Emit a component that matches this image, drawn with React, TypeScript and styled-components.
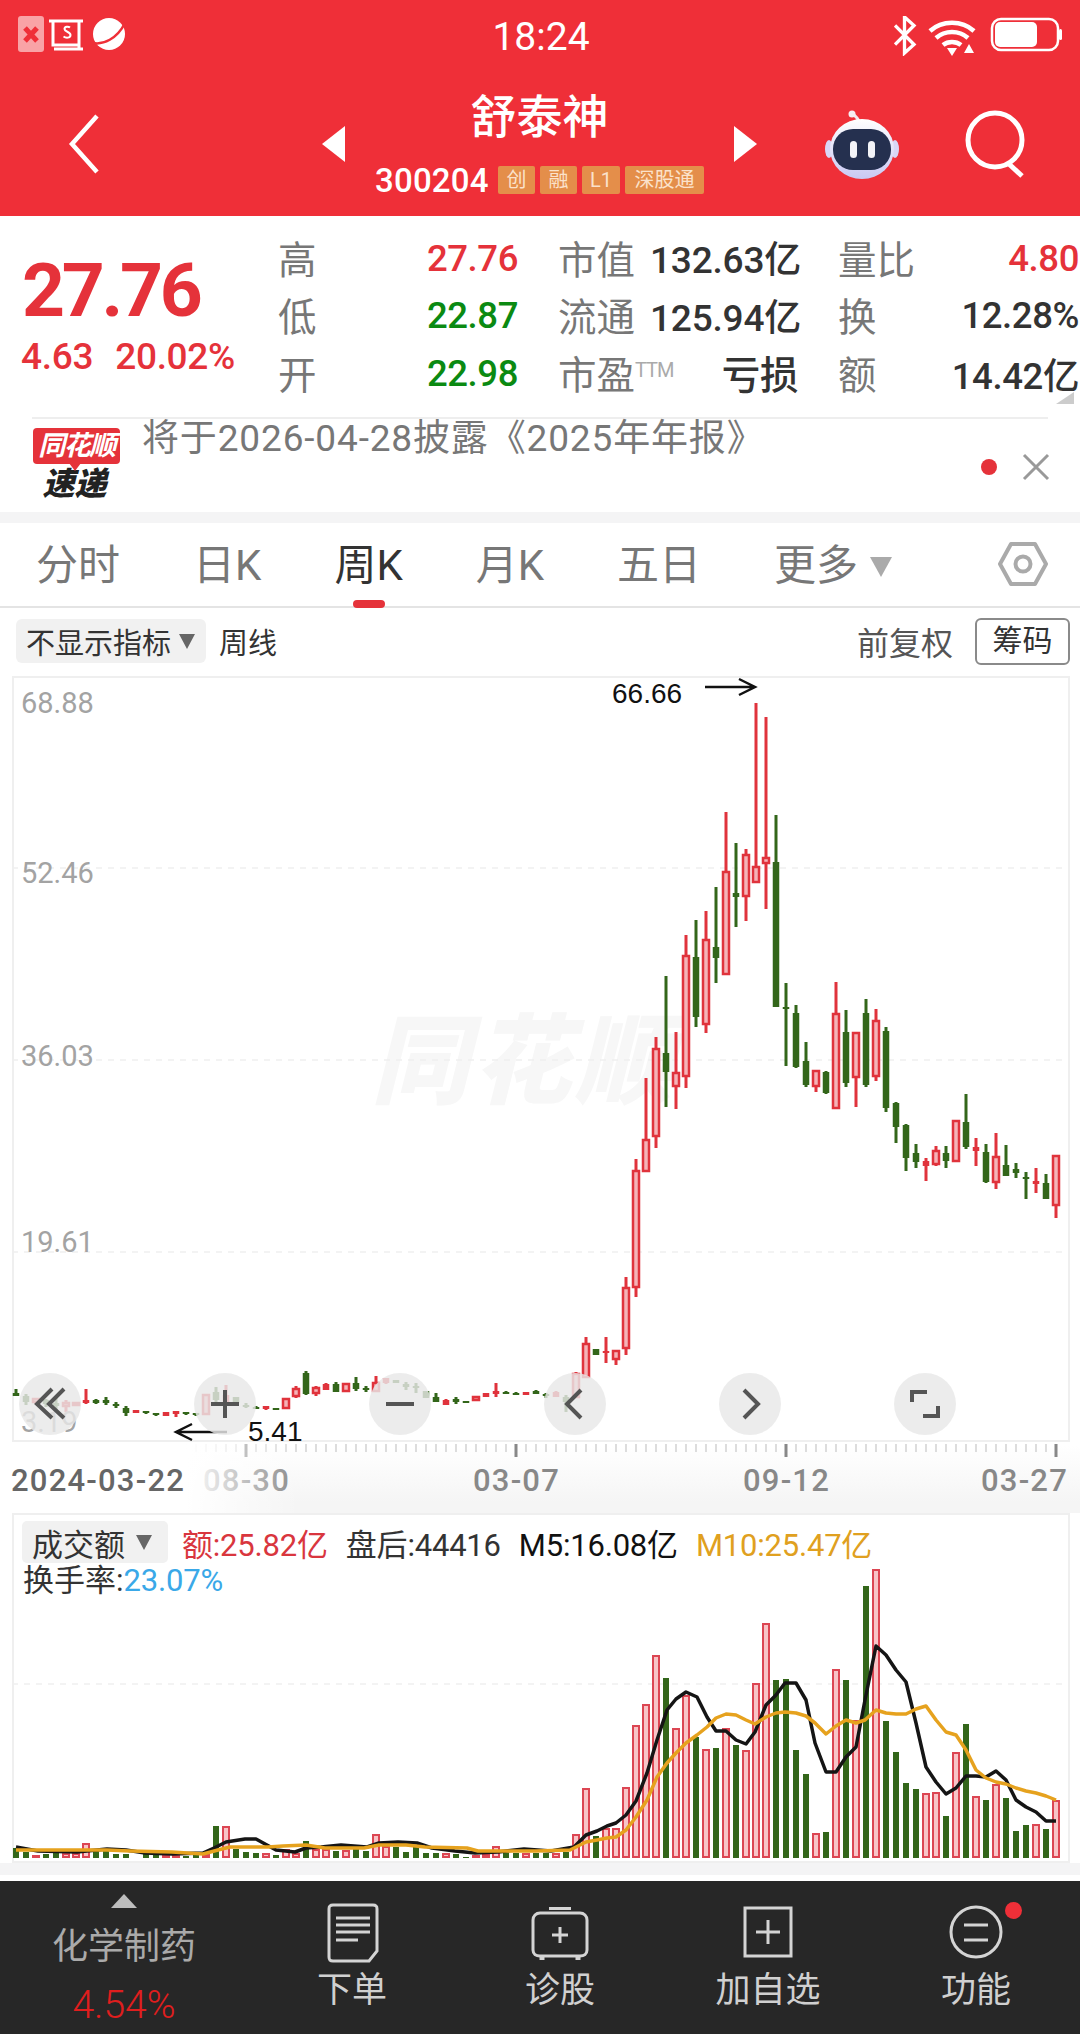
import React from "react";
import styled, { createGlobalStyle } from "styled-components";

const RED = "#e5323a";
const GREEN = "#0b8a12";
const CANDLE_RED = "#e0333c";
const CANDLE_GREEN = "#33661a";

const GlobalStyle = createGlobalStyle`
  html, body {
    margin: 0;
    padding: 0;
    background: #fff;
  }
  body {
    width: 1080px;
    height: 2034px;
    overflow: hidden;
    font-family: Roboto, "Noto Sans CJK SC", sans-serif;
  }
  * { box-sizing: border-box; }
`;

// [wickTop, bodyTop, bodyBottom, wickBottom, type]  g = falling, r = solid rise, h = hollow rise
type Candle = [number, number, number, number, "g" | "r" | "h"];

const candles: Candle[] = [
  [1389, 1393, 1396, 1396, "g"], [1394, 1396, 1402, 1405, "g"], [1398, 1398, 1403, 1404, "h"], [1399, 1400, 1404, 1407, "g"],
  [1398, 1403, 1406, 1410, "g"], [1400, 1402, 1407, 1412, "h"], [1402, 1402, 1406, 1406, "h"], [1389, 1400, 1403, 1404, "r"],
  [1399, 1400, 1403, 1404, "g"], [1397, 1400, 1403, 1405, "g"], [1402, 1404, 1406, 1408, "g"], [1406, 1408, 1413, 1416, "g"],
  [1410, 1410, 1413, 1413, "r"], [1411, 1411, 1413, 1414, "g"], [1413, 1413, 1415, 1416, "g"], [1412, 1412, 1416, 1416, "r"],
  [1411, 1411, 1414, 1417, "r"], [1412, 1412, 1414, 1415, "g"], [1413, 1413, 1415, 1416, "g"], [1394, 1394, 1415, 1415, "h"],
  [1387, 1392, 1400, 1403, "g"], [1385, 1395, 1403, 1406, "r"], [1397, 1397, 1403, 1403, "g"], [1403, 1405, 1406, 1408, "g"],
  [1406, 1407, 1408, 1409, "g"], [1406, 1406, 1409, 1410, "r"], [1408, 1408, 1409, 1410, "g"], [1398, 1398, 1409, 1409, "h"],
  [1386, 1388, 1397, 1398, "h"], [1371, 1373, 1394, 1395, "g"], [1386, 1387, 1394, 1396, "h"], [1383, 1384, 1390, 1390, "r"],
  [1382, 1384, 1392, 1392, "g"], [1383, 1383, 1392, 1392, "h"], [1377, 1383, 1389, 1391, "g"], [1386, 1388, 1390, 1392, "g"],
  [1376, 1382, 1392, 1392, "h"], [1378, 1378, 1383, 1384, "r"], [1380, 1380, 1383, 1383, "g"], [1382, 1384, 1387, 1390, "g"],
  [1383, 1386, 1388, 1393, "g"], [1391, 1391, 1398, 1398, "g"], [1393, 1397, 1402, 1402, "g"], [1399, 1400, 1405, 1405, "r"],
  [1397, 1399, 1402, 1404, "g"], [1401, 1401, 1402, 1403, "g"], [1396, 1396, 1401, 1401, "h"], [1393, 1393, 1397, 1397, "r"],
  [1383, 1391, 1394, 1397, "r"], [1391, 1392, 1394, 1394, "g"], [1392, 1393, 1395, 1395, "g"], [1392, 1392, 1395, 1395, "r"],
  [1390, 1391, 1394, 1394, "g"], [1393, 1394, 1396, 1398, "g"], [1391, 1392, 1397, 1397, "r"], [1395, 1397, 1402, 1412, "g"],
  [1372, 1373, 1398, 1398, "h"], [1337, 1343, 1378, 1378, "h"], [1349, 1349, 1355, 1355, "g"], [1337, 1351, 1353, 1363, "r"],
  [1350, 1350, 1360, 1365, "h"], [1277, 1287, 1349, 1355, "h"], [1159, 1170, 1288, 1297, "h"], [1078, 1139, 1172, 1172, "h"],
  [1037, 1048, 1137, 1148, "h"], [976, 1053, 1072, 1107, "g"], [1032, 1072, 1087, 1109, "h"], [935, 955, 1077, 1088, "h"],
  [920, 957, 1017, 1027, "g"], [911, 939, 1025, 1033, "h"], [887, 947, 958, 983, "g"], [812, 871, 975, 975, "h"],
  [843, 893, 897, 927, "g"], [849, 854, 897, 921, "h"], [703, 866, 883, 883, "h"], [717, 857, 864, 909, "h"],
  [815, 862, 1007, 1007, "g"], [983, 1007, 1009, 1066, "g"], [1005, 1013, 1067, 1068, "g"], [1042, 1061, 1085, 1087, "g"],
  [1070, 1070, 1087, 1092, "h"], [1071, 1072, 1093, 1094, "g"], [982, 1013, 1109, 1109, "h"], [1010, 1032, 1083, 1087, "g"],
  [1032, 1032, 1078, 1107, "h"], [999, 1013, 1085, 1087, "g"], [1009, 1020, 1077, 1081, "h"], [1027, 1031, 1108, 1112, "g"],
  [1102, 1103, 1127, 1143, "g"], [1124, 1125, 1158, 1171, "g"], [1144, 1153, 1162, 1168, "g"], [1158, 1161, 1166, 1181, "r"],
  [1146, 1150, 1165, 1166, "h"], [1146, 1153, 1161, 1168, "g"], [1120, 1120, 1162, 1162, "h"], [1094, 1122, 1147, 1149, "g"],
  [1138, 1147, 1151, 1166, "r"], [1144, 1152, 1182, 1183, "g"], [1133, 1156, 1183, 1189, "h"], [1145, 1165, 1176, 1176, "g"],
  [1163, 1169, 1173, 1178, "g"], [1172, 1177, 1178, 1199, "g"], [1168, 1181, 1184, 1193, "r"], [1174, 1183, 1199, 1199, "g"],
  [1155, 1155, 1206, 1218, "h"],
];

// [barTop, type]
const volumes: [number, "g" | "h"][] = [
  [1848, "g"], [1852, "g"], [1855, "h"], [1854, "g"], [1852, "g"], [1853, "h"], [1853, "h"], [1843, "h"], [1851, "g"], [1850, "g"],
  [1854, "g"], [1854, "g"], [1856, "h"], [1854, "g"], [1854, "g"], [1855, "h"], [1855, "h"], [1856, "g"], [1854, "g"], [1854, "h"],
  [1826, "g"], [1826, "h"], [1849, "g"], [1852, "g"], [1853, "g"], [1853, "h"], [1855, "g"], [1849, "h"], [1853, "h"], [1841, "g"],
  [1849, "h"], [1849, "h"], [1851, "g"], [1850, "h"], [1849, "g"], [1851, "g"], [1834, "h"], [1846, "h"], [1847, "g"], [1852, "g"],
  [1847, "g"], [1853, "g"], [1853, "g"], [1853, "h"], [1854, "g"], [1857, "g"], [1855, "h"], [1854, "h"], [1846, "h"], [1853, "g"],
  [1853, "g"], [1853, "h"], [1853, "g"], [1853, "g"], [1853, "h"], [1852, "g"], [1834, "h"], [1788, "h"], [1836, "g"], [1828, "h"],
  [1828, "h"], [1787, "h"], [1725, "h"], [1704, "h"], [1655, "h"], [1678, "g"], [1728, "h"], [1695, "h"], [1737, "g"], [1749, "h"],
  [1748, "g"], [1728, "h"], [1745, "g"], [1750, "h"], [1683, "h"], [1623, "h"], [1680, "g"], [1679, "g"], [1750, "g"], [1774, "g"],
  [1833, "h"], [1832, "g"], [1669, "h"], [1680, "g"], [1720, "h"], [1586, "g"], [1569, "h"], [1721, "g"], [1752, "g"], [1783, "g"],
  [1789, "g"], [1793, "h"], [1792, "h"], [1816, "g"], [1752, "h"], [1724, "g"], [1796, "h"], [1800, "g"], [1784, "h"], [1798, "g"],
  [1831, "g"], [1825, "g"], [1824, "h"], [1829, "g"], [1800, "h"],
];

const m5 =
  "16,1847 38,1851 77,1852 107,1849 126,1850 145,1853 172,1854 203,1853 214,1848 226,1842 245,1839 256,1839 276,1850 295,1852 306,1848 321,1847 341,1845 367,1847 379,1843 398,1842 417,1843 432,1848 455,1851 475,1853 498,1852 524,1849 551,1851 574,1847 586,1835 597,1831 607,1826 616,1823 626,1815 636,1801 647,1773 657,1740 667,1710 676,1699 686,1692 697,1697 707,1717 716,1731 726,1731 736,1740 746,1744 755,1732 766,1705 776,1695 785,1683 796,1683 806,1700 815,1743 826,1772 836,1772 846,1757 856,1747 865,1700 876,1646 886,1655 896,1670 906,1682 916,1723 926,1767 936,1782 946,1794 956,1788 966,1776 976,1776 986,1777 996,1771 1006,1780 1016,1800 1026,1807 1036,1812 1046,1821 1056,1821";
const m10 =
  "16,1850 57,1850 84,1850 107,1850 130,1851 172,1852 203,1854 218,1850 230,1847 268,1847 283,1846 306,1845 325,1848 364,1848 379,1845 406,1845 425,1847 467,1848 478,1851 536,1851 570,1850 586,1842 597,1840 607,1838 616,1837 626,1830 636,1817 647,1800 657,1777 667,1763 676,1753 686,1743 697,1735 707,1727 716,1718 726,1714 736,1715 746,1720 755,1724 766,1717 776,1713 785,1712 796,1713 806,1716 815,1723 826,1734 836,1726 846,1720 856,1723 865,1720 876,1710 886,1713 896,1714 906,1714 916,1709 926,1706 936,1720 946,1732 956,1735 966,1750 976,1770 986,1778 996,1782 1006,1784 1016,1788 1026,1791 1036,1793 1046,1796 1056,1800";

const candleX = (i: number) => 16 + i * 10;

const Page = styled.div`
  width: 1080px;
  height: 2034px;
  display: flex;
  flex-direction: column;
  background: #fff;
`;

/* ---------- red header ---------- */
const Header = styled.header`
  height: 216px;
  background: #ef2f38;
  color: #fff;
`;
const StatusBar = styled.div`
  height: 72px;
  padding: 0 16px 0 18px;
  display: grid;
  grid-template-columns: 1fr auto 1fr;
  align-items: center;
`;
const StatusTime = styled.span`
  font-size: 39px;
  line-height: 1;
  margin-top: 3px;
`;
const StatusRight = styled.div`
  justify-self: end;
`;
const NavBar = styled.div`
  height: 144px;
  padding: 0 51px 0 68px;
  display: flex;
  align-items: center;
`;
const NavCenter = styled.div`
  display: flex;
  align-items: center;
  margin-left: 222px;
  gap: 30px;
`;
const Arrow = styled.span<{ $dir: "left" | "right" }>`
  width: 0;
  height: 0;
  border-top: 18px solid transparent;
  border-bottom: 18px solid transparent;
  ${(p) => (p.$dir === "left" ? "border-right: 23px solid #fff;" : "border-left: 23px solid #fff;")}
`;
const StockBlock = styled.div`
  display: flex;
  flex-direction: column;
  align-items: center;
  margin-top: -7px;
`;
const StockName = styled.div`
  font-size: 46px;
  line-height: 62px;
  font-weight: 500;
`;
const CodeRow = styled.div`
  display: flex;
  align-items: center;
  gap: 5px;
  margin-top: 17px;
  height: 30px;
`;
const StockCode = styled.span`
  font-size: 33px;
  font-weight: 500;
  width: 118px;
  letter-spacing: 0.2px;
`;
const Tag = styled.span<{ $w: number }>`
  width: ${(p) => p.$w}px;
  height: 28px;
  background: #e48e4a;
  color: #fbe2cb;
  border-radius: 2px;
  font-size: 20px;
  line-height: 28px;
  text-align: center;
`;
const NavIcons = styled.div`
  margin-left: auto;
  display: flex;
  align-items: center;
  gap: 66px;
`;

/* ---------- quote ---------- */
const Quote = styled.section`
  position: relative;
  height: 201px;
  padding: 12px 1px 0 21px;
  display: flex;
`;
const PriceBlock = styled.div`
  width: 257px;
  padding-top: 20px;
`;
const BigPrice = styled.div`
  font-size: 75px;
  line-height: 84px;
  font-weight: 700;
  color: ${RED};
  margin-left: 1px;
  letter-spacing: -3.3px;
`;
const PriceChange = styled.div`
  margin-top: 3px;
  display: flex;
  gap: 22px;
  font-size: 37px;
  line-height: 44px;
  font-weight: 500;
  color: ${RED};
  letter-spacing: -0.3px;
`;
const QuoteGrid = styled.div`
  flex: 1;
  display: grid;
  grid-template-columns: 62px 178px 132px 148px 120px 1fr;
  grid-auto-rows: 57.5px;
  align-items: center;
`;
const QLabel = styled.span<{ $indent?: boolean }>`
  font-size: 38.5px;
  color: #777;
  white-space: nowrap;
  margin-left: ${(p) => (p.$indent ? "40px" : "0")};
`;
const QValue = styled.span<{ $color?: string }>`
  font-size: 36.5px;
  font-weight: 500;
  color: ${(p) => p.$color || "#333"};
  text-align: right;
  white-space: nowrap;
  letter-spacing: -0.4px;
  margin-top: 3px;
`;
const QValueLabelled = styled(QValue)`
  font-size: 37px;
  letter-spacing: -0.2px;
  margin-top: 1px;
`;
const QLoss = styled(QValue)`
  font-size: 38.5px;
  margin-top: 0;
`;
const Ttm = styled.sup`
  font-size: 20px;
  color: #aaa;
  vertical-align: 12px;
  line-height: 0;
  letter-spacing: -1px;
`;
const CornerMark = styled.span`
  position: absolute;
  right: 6px;
  bottom: 13px;
  width: 0;
  height: 0;
  border-left: 18px solid transparent;
  border-bottom: 12px solid #ccc;
`;

/* ---------- notice ---------- */
const Notice = styled.div`
  height: 95px;
  margin: 0 32px;
  border-top: 2px solid #eee;
  display: flex;
  position: relative;
`;
const Logo = styled.div`
  margin: 9px 0 0 1px;
  width: 87px;
  display: flex;
  flex-direction: column;
  align-items: center;
`;
const LogoBadge = styled.div`
  position: relative;
  width: 87px;
  height: 36px;
  background: ${RED};
  border-radius: 4px;
  color: #fff;
  font-size: 27px;
  line-height: 36px;
  font-weight: 700;
  font-style: italic;
  text-align: center;
  white-space: nowrap;
  letter-spacing: -1.5px;
  &::after {
    content: "";
    position: absolute;
    left: 36px;
    bottom: -7px;
    border-left: 6px solid transparent;
    border-right: 6px solid transparent;
    border-top: 8px solid ${RED};
  }
`;
const LogoSub = styled.div`
  margin-top: 2px;
  margin-left: -4px;
  font-size: 32px;
  line-height: 36px;
  font-weight: 900;
  font-style: italic;
  color: #222;
`;
const NoticeText = styled.div`
  margin-left: 22px;
  font-size: 37px;
  line-height: 40px;
  color: #777;
  white-space: nowrap;
  letter-spacing: 0.85px;
`;
const NoticeActions = styled.div`
  margin: 2px -3px 0 auto;
  align-self: center;
  display: flex;
  align-items: center;
  gap: 24px;
`;
const Dot = styled.span<{ $size: number }>`
  width: ${(p) => p.$size}px;
  height: ${(p) => p.$size}px;
  border-radius: 50%;
  background: ${RED};
`;
const Band = styled.div<{ $h: number }>`
  height: ${(p) => p.$h}px;
  flex: none;
  background: #f4f4f5;
`;

/* ---------- tabs ---------- */
const Tabs = styled.nav`
  height: 85px;
  padding: 0 32px 0 36px;
  border-bottom: 2px solid #e4e4e4;
  display: flex;
  align-items: center;
  gap: 73px;
`;
const Tab = styled.div<{ $active?: boolean }>`
  position: relative;
  display: flex;
  align-items: center;
  font-size: 42px;
  line-height: 56px;
  margin-top: 2px;
  color: ${(p) => (p.$active ? "#333" : "#777")};
  ${(p) =>
    p.$active
      ? `&::after {
    content: "";
    position: absolute;
    left: 19px;
    bottom: -14px;
    width: 32px;
    height: 8px;
    border-radius: 4px;
    background: ${RED};
  }`
      : ""}
`;
const Caret = styled.span<{ $size: number; $color: string }>`
  display: inline-block;
  width: 0;
  height: 0;
  border-left: ${(p) => p.$size * 0.55}px solid transparent;
  border-right: ${(p) => p.$size * 0.55}px solid transparent;
  border-top: ${(p) => p.$size}px solid ${(p) => p.$color};
`;
const TabCaret = styled(Caret)`
  margin-left: 12px;
  margin-top: 2px;
`;
const TabSetting = styled.div`
  margin-left: auto;
  margin-top: -2px;
  display: flex;
`;

/* ---------- chart toolbar ---------- */
const ChartBar = styled.div`
  height: 68px;
  padding: 0 10px 2px 16px;
  display: flex;
  align-items: center;
  font-size: 29px;
`;
const Selector = styled.div`
  height: 44px;
  width: 190px;
  padding: 0 10px;
  border-radius: 6px;
  background: #f1f1f1;
  color: #333;
  display: flex;
  align-items: center;
  gap: 8px;
  white-space: nowrap;
`;
const ChartBarText = styled.span<{ $color: string }>`
  margin-left: 13px;
  color: ${(p) => p.$color};
`;
const ChartBarRight = styled.div`
  margin-left: auto;
  display: flex;
  align-items: center;
  gap: 22px;
  font-size: 32px;
  color: #555;
`;
const ChipButton = styled.div`
  width: 95px;
  height: 47px;
  border: 2px solid #8a8a8a;
  border-radius: 6px;
  color: #333;
  font-size: 30px;
  line-height: 42px;
  text-align: center;
`;

/* ---------- price chart ---------- */
const ChartBox = styled.div<{ $h: number }>`
  position: relative;
  margin: 0 10px 0 12px;
  height: ${(p) => p.$h}px;
  flex: none;
  border: 2.5px solid #efefef;
`;
const ChartSvg = styled.svg`
  position: absolute;
  left: -2.5px;
  top: -2.5px;
`;
const Watermark = styled.div`
  position: absolute;
  left: 357px;
  top: 335px;
  font-size: 98px;
  font-weight: 900;
  font-style: italic;
  line-height: 100px;
  letter-spacing: 4px;
  color: #f7f7f7;
  white-space: nowrap;
`;
const PriceLabel = styled.span<{ $top: number }>`
  position: absolute;
  left: 7px;
  top: ${(p) => p.$top}px;
  font-size: 29px;
  line-height: 32px;
  color: #a3a3a3;
`;
const ExtremeLabel = styled.span<{ $left: number; $top: number }>`
  position: absolute;
  left: ${(p) => p.$left}px;
  top: ${(p) => p.$top}px;
  font-family: "Liberation Sans", sans-serif;
  font-size: 28px;
  line-height: 28px;
  color: #111;
`;
const ControlRow = styled.div`
  position: absolute;
  left: 5px;
  bottom: 5px;
  display: flex;
  gap: 113px;
`;
const ControlButton = styled.div`
  width: 62px;
  height: 62px;
  border-radius: 50%;
  background: rgba(232, 232, 232, 0.82);
  display: flex;
  align-items: center;
  justify-content: center;
`;

/* ---------- time axis ---------- */
const AxisArea = styled.div`
  position: relative;
  height: 71px;
  flex: none;
  background: linear-gradient(#fff 5%, #f5f5f5 85%);
  &::after {
    content: "";
    position: absolute;
    inset: 0 auto 0 0;
    width: 300px;
    background: linear-gradient(to right, #fff 62%, rgba(255, 255, 255, 0));
  }
`;
const AxisTicks = styled.svg`
  display: block;
`;
const AxisLabels = styled.div`
  display: flex;
  padding-left: 11px;
  margin-top: 1px;
`;
const AxisLabel = styled.span<{ $w: number; $color: string; $front?: boolean }>`
  position: relative;
  z-index: ${(p) => (p.$front ? 2 : 0)};
  width: ${(p) => p.$w}px;
  font-size: 31px;
  line-height: 40px;
  font-weight: 500;
  color: ${(p) => p.$color};
  letter-spacing: 1.2px;
  white-space: nowrap;
`;

/* ---------- volume ---------- */
const VolumeLegend = styled.div`
  position: absolute;
  left: 8px;
  top: 6px;
  font-size: 31px;
`;
const LegendRow = styled.div`
  display: flex;
  align-items: center;
  gap: 18px;
  height: 42px;
  white-space: nowrap;
`;
const VolumeSelector = styled.div`
  flex: none;
  width: 146px;
  height: 42px;
  margin-right: -4px;
  padding-left: 10px;
  background: #f1f1f1;
  border-radius: 5px;
  color: #333;
  display: flex;
  align-items: center;
  gap: 11px;
`;
const LegendItem = styled.span<{ $color: string }>`
  color: ${(p) => p.$color};
  letter-spacing: -0.2px;
`;
const TurnoverRow = styled.div`
  line-height: 36px;
  margin-left: 1px;
  color: #333;
`;

/* ---------- bottom bar ---------- */
const WhiteGap = styled.div`
  height: 6px;
  flex: none;
`;
const BottomBar = styled.footer`
  flex: 1;
  background: #272727;
  display: flex;
`;
const SectorCell = styled.div`
  width: 248px;
  padding-top: 13px;
  display: flex;
  flex-direction: column;
  align-items: center;
`;
const UpMark = styled.span`
  width: 0;
  height: 0;
  border-left: 13px solid transparent;
  border-right: 13px solid transparent;
  border-bottom: 14px solid #bdbdbd;
`;
const SectorName = styled.div`
  margin-top: 14px;
  font-size: 36px;
  line-height: 50px;
  color: #aaa;
`;
const SectorChange = styled.div`
  margin-top: 12px;
  font-size: 39px;
  line-height: 42px;
  color: #e01e1e;
  font-weight: 300;
`;
const ActionCell = styled.div`
  position: relative;
  width: 208px;
  padding-top: 22px;
  display: flex;
  flex-direction: column;
  align-items: center;
`;
const ActionLabel = styled.span`
  margin-top: 8px;
  font-size: 35px;
  line-height: 40px;
  color: #d0d0d0;
`;
const ActionBadge = styled(Dot)`
  position: absolute;
  left: 133px;
  top: 21px;
  background: #ef2f38;
`;

/* ---------- drawings ---------- */
const StatusLeftIcons = () => (
  <svg width="112" height="40" viewBox="0 0 112 40" style={{ display: "block" }}>
    <rect x="0" y="0" width="26" height="36" rx="3" fill="#f9a3a6" />
    <path d="M7 12l12 13M19 12L7 25" stroke="#ef2f38" strokeWidth="5" />
    <path d="M35 5h26v24H35zM31 5h34M61 29v5M36 33h29" fill="none" stroke="#fff" strokeWidth="3" />
    <path d="M52 11.5c-1.200-1-5.500-1.500-5.500 1.500 0 3 6 2.500 6 6s-5 3-7 1.500" fill="none" stroke="#fff" strokeWidth="2" />
    <circle cx="91" cy="18" r="16" fill="#fff" />
    <path d="M75 27c10 2 24-4 32-20" fill="none" stroke="#ef2f38" strokeWidth="2.500" />
  </svg>
);

const StatusRightIcons = () => (
  <svg width="170" height="40" viewBox="0 0 170 40" style={{ display: "block" }}>
    <path d="M0 10l20 20-10 9V1l10 9L0 30" fill="none" stroke="#fff" strokeWidth="3.500" transform="translate(1 0) scale(.95)" />
    <path d="M36 15c12-11 32-11 44 0M42 22c9-8 23-8 32 0M49 29c5-4 13-4 18 0" fill="none" stroke="#fff" strokeWidth="4.500" />
    <path d="M53 32h10l-5 8zM75 28l5 9h-10z" fill="#fff" />
    <rect x="98" y="3" width="66" height="31" rx="9" fill="none" stroke="#fff" strokeWidth="2.500" />
    <rect x="101" y="6" width="42" height="25" rx="5" fill="#fff" />
    <rect x="165" y="13" width="3" height="11" rx="1.500" fill="#fff" />
  </svg>
);

const RobotIcon = () => (
  <svg width="74" height="70" viewBox="0 0 74 70">
    <defs>
      <linearGradient id="robotShell" x1="0" y1="0" x2="0" y2="1">
        <stop offset="0" stopColor="#ffffff" />
        <stop offset="1" stopColor="#c9c8f3" />
      </linearGradient>
    </defs>
    <path d="M34 12c-2-4-4-5-6-7" fill="none" stroke="#f3e9ee" strokeWidth="3" />
    <circle cx="27" cy="5" r="3.500" fill="#f7eef2" />
    <ellipse cx="4" cy="40" rx="4" ry="9" fill="#d9d6f5" />
    <ellipse cx="70" cy="40" rx="4" ry="9" fill="#d9d6f5" />
    <ellipse cx="37" cy="40" rx="32" ry="30" fill="url(#robotShell)" />
    <rect x="8" y="20" width="58" height="41" rx="20" fill="#25304f" />
    <rect x="25" y="32" width="7" height="17" rx="3.500" fill="#f3f3f7" />
    <rect x="43" y="32" width="7" height="17" rx="3.500" fill="#f3f3f7" />
  </svg>
);

const SearchIcon = () => (
  <svg width="64" height="68" viewBox="0 0 64 68">
    <circle cx="30" cy="30" r="27" fill="none" stroke="#fff" strokeWidth="5" />
    <path d="M44 54l13 12" stroke="#fff" strokeWidth="5" />
  </svg>
);

const PriceChart = () => (
  <ChartSvg width="1058" height="766" viewBox="12 676 1058 766">
    {[868, 1060, 1252].map((y) => (
      <line key={y} x1="12" x2="1066" y1={y} y2={y} stroke="#efefef" strokeWidth="1.500" strokeDasharray="6 6" />
    ))}
    {candles.map(([wt, bt, bb, wb, kind], i) => {
      const x = candleX(i);
      const color = kind === "g" ? CANDLE_GREEN : CANDLE_RED;
      return (
        <g key={i}>
          <rect x={x - 1.5} y={wt} width="3" height={wb - wt} fill={color} />
          {kind === "h" ? (
            <rect x={x - 3} y={bt + 1} width="6" height={Math.max(bb - bt - 2, 1)} fill="#f5b3b7" stroke={color} strokeWidth="2.500" />
          ) : (
            <rect x={x - 3.25} y={bt} width="6.500" height={Math.max(bb - bt, 2)} fill={color} />
          )}
        </g>
      );
    })}
    <path d="M705 687h50M739 679l16 8-16 8" fill="none" stroke="#111" strokeWidth="2.500" />
    <path d="M227 1432h-51M192 1424l-16 8 16 8" fill="none" stroke="#111" strokeWidth="2.500" />
  </ChartSvg>
);

const VolumeChart = () => (
  <ChartSvg width="1058" height="350" viewBox="12 1513 1058 350">
    <line x1="12" x2="1066" y1="1684" y2="1684" stroke="#efefef" strokeWidth="1.500" strokeDasharray="6 6" />
    {volumes.map(([top, kind], i) => {
      const x = candleX(i);
      return kind === "g" ? (
        <rect key={i} x={x - 3} y={top} width="6" height={1858 - top} fill={CANDLE_GREEN} />
      ) : (
        <rect key={i} x={x - 3} y={top + 1} width="6" height={1856 - top} fill="#f8c4c7" stroke="#dc4653" strokeWidth="2" />
      );
    })}
    <polyline points={m5} fill="none" stroke="#151515" strokeWidth="3.500" strokeLinejoin="round" />
    <polyline points={m10} fill="none" stroke="#e6a21e" strokeWidth="3.500" strokeLinejoin="round" />
  </ChartSvg>
);

const TimeTicks = () => (
  <AxisTicks width="1080" height="18" viewBox="0 1442 1080 18">
    {candles.map((_, i) => {
      const major = i % 27 === 23;
      return (
        <rect
          key={i}
          x={candleX(i) - (major ? 1.5 : 0.5)}
          y={1444}
          width={major ? 3 : 1}
          height={major ? 13 : 8}
          fill={major ? "#888" : "#bbb"}
        />
      );
    })}
  </AxisTicks>
);

const controlIcons = [
  <path key="a" d="M20 3L5 18l15 14M32 3L17 18l15 14" />,
  <path key="b" d="M4 18h28M18 4v28" />,
  <path key="c" d="M4 18h28" />,
  <path key="d" d="M24 4L10 18l14 14" />,
  <path key="e" d="M12 4l14 14-14 14" />,
  <path key="f" d="M20 6H5v10M16 30h15V20" />,
];

const actionIcons = [
  <g key="order">
    <path d="M11 2h40c3 0 4 1 4 4v42l-8 10H11c-3 0-4-1-4-4V6c0-3 1-4 4-4z" />
    <path d="M14 15h34M14 22h34M14 29h34M14 37h22" />
  </g>,
  <g key="diagnose">
    <path d="M19 5.500h22M3 17c0-4 3-7 7-7h40c4 0 7 3 7 7v30c0 4-3 6-7 6H10c-4 0-7-2-7-6z" />
    <path d="M12 54v3M48 54v3" strokeWidth="5" />
    <path d="M22 32h16M30 24v16" />
  </g>,
  <g key="add">
    <path d="M7 5h46v48H7z" />
    <path d="M18 29h24M30 17v24" />
  </g>,
  <g key="more">
    <circle cx="30" cy="29" r="25" />
    <path d="M18 22h24M18 37h24" />
  </g>,
];

export default function App() {
  return (
    <Page>
      <GlobalStyle />
      <Header>
        <StatusBar>
          <StatusLeftIcons />
          <StatusTime>18:24</StatusTime>
          <StatusRight>
            <StatusRightIcons />
          </StatusRight>
        </StatusBar>
        <NavBar>
          <svg width="32" height="60" viewBox="0 0 32 60">
            <path d="M29 2L4 30l25 28" fill="none" stroke="#fff" strokeWidth="4.500" />
          </svg>
          <NavCenter>
            <Arrow $dir="left" />
            <StockBlock>
              <StockName>舒泰神</StockName>
              <CodeRow>
                <StockCode>300204</StockCode>
                <Tag $w={37}>创</Tag>
                <Tag $w={37}>融</Tag>
                <Tag $w={38}>L1</Tag>
                <Tag $w={79}>深股通</Tag>
              </CodeRow>
            </StockBlock>
            <Arrow $dir="right" />
          </NavCenter>
          <NavIcons>
            <RobotIcon />
            <SearchIcon />
          </NavIcons>
        </NavBar>
      </Header>

      <Quote>
        <PriceBlock>
          <BigPrice>27.76</BigPrice>
          <PriceChange>
            <span>4.63</span>
            <span>20.02%</span>
          </PriceChange>
        </PriceBlock>
        <QuoteGrid>
          <QLabel>高</QLabel>
          <QValue $color={RED}>27.76</QValue>
          <QLabel $indent>市值</QLabel>
          <QValueLabelled>132.63亿</QValueLabelled>
          <QLabel $indent>量比</QLabel>
          <QValue $color={RED}>4.80</QValue>

          <QLabel>低</QLabel>
          <QValue $color={GREEN}>22.87</QValue>
          <QLabel $indent>流通</QLabel>
          <QValueLabelled>125.94亿</QValueLabelled>
          <QLabel $indent>换</QLabel>
          <QValue>12.28%</QValue>

          <QLabel>开</QLabel>
          <QValue $color={GREEN}>22.98</QValue>
          <QLabel $indent>
            市盈<Ttm>TTM</Ttm>
          </QLabel>
          <QLoss>亏损</QLoss>
          <QLabel $indent>额</QLabel>
          <QValue>14.42亿</QValue>
        </QuoteGrid>
        <CornerMark />
      </Quote>

      <Notice>
        <Logo>
          <LogoBadge>同花顺</LogoBadge>
          <LogoSub>速递</LogoSub>
        </Logo>
        <NoticeText>将于2026-04-28披露《2025年年报》</NoticeText>
        <NoticeActions>
          <Dot $size={16} />
          <svg width="30" height="30" viewBox="0 0 30 30">
            <path d="M3 3l24 24M27 3L3 27" stroke="#999" strokeWidth="3" />
          </svg>
        </NoticeActions>
      </Notice>
      <Band $h={11} />

      <Tabs>
        <Tab>分时</Tab>
        <Tab>日K</Tab>
        <Tab $active>周K</Tab>
        <Tab>月K</Tab>
        <Tab>五日</Tab>
        <Tab>
          更多
          <TabCaret $size={20} $color="#aaa" />
        </Tab>
        <TabSetting>
          <svg width="50" height="46" viewBox="0 0 50 46">
            <path d="M2 23L13 3h24l11 20-11 20H13z" fill="none" stroke="#aaa" strokeWidth="4" strokeLinejoin="round" />
            <circle cx="25" cy="23" r="7.500" fill="none" stroke="#aaa" strokeWidth="4" />
          </svg>
        </TabSetting>
      </Tabs>

      <ChartBar>
        <Selector>
          不显示指标
          <Caret $size={15} $color="#666" />
        </Selector>
        <ChartBarText $color="#333">周线</ChartBarText>
        <ChartBarRight>
          前复权
          <ChipButton>筹码</ChipButton>
        </ChartBarRight>
      </ChartBar>

      <ChartBox $h={766}>
        <Watermark>同花顺</Watermark>
        <PriceChart />
        <PriceLabel $top={9}>68.88</PriceLabel>
        <PriceLabel $top={179}>52.46</PriceLabel>
        <PriceLabel $top={362}>36.03</PriceLabel>
        <PriceLabel $top={548}>19.61</PriceLabel>
        <PriceLabel $top={728}>3.19</PriceLabel>
        <ExtremeLabel $left={598} $top={2}>66.66</ExtremeLabel>
        <ExtremeLabel $left={234} $top={740}>5.41</ExtremeLabel>
        <ControlRow>
          {controlIcons.map((icon, i) => (
            <ControlButton key={i}>
              <svg width="36" height="36" viewBox="0 0 36 36" fill="none" stroke="#555" strokeWidth="4">
                {icon}
              </svg>
            </ControlButton>
          ))}
        </ControlRow>
      </ChartBox>

      <AxisArea>
        <TimeTicks />
        <AxisLabels>
          <AxisLabel $w={192} $color="#666" $front>2024-03-22</AxisLabel>
          <AxisLabel $w={270} $color="#888">08-30</AxisLabel>
          <AxisLabel $w={270} $color="#888">03-07</AxisLabel>
          <AxisLabel $w={238} $color="#888">09-12</AxisLabel>
          <AxisLabel $w={90} $color="#888">03-27</AxisLabel>
        </AxisLabels>
      </AxisArea>

      <ChartBox $h={350}>
        <VolumeChart />
        <VolumeLegend>
          <LegendRow>
            <VolumeSelector>
              成交额
              <Caret $size={15} $color="#666" />
            </VolumeSelector>
            <LegendItem $color="#d9363e">额:25.82亿</LegendItem>
            <LegendItem $color="#333">盘后:44416</LegendItem>
            <LegendItem $color="#111">M5:16.08亿</LegendItem>
            <LegendItem $color="#e0a020">M10:25.47亿</LegendItem>
          </LegendRow>
          <TurnoverRow>
            换手率:<LegendItem $color="#3aa8e8">23.07%</LegendItem>
          </TurnoverRow>
        </VolumeLegend>
      </ChartBox>
      <Band $h={12} />
      <WhiteGap />

      <BottomBar>
        <SectorCell>
          <UpMark />
          <SectorName>化学制药</SectorName>
          <SectorChange>4.54%</SectorChange>
        </SectorCell>
        {["下单", "诊股", "加自选", "功能"].map((label, i) => (
          <ActionCell key={label}>
            <svg width="60" height="60" viewBox="0 0 60 60" fill="none" stroke="#d4d4d4" strokeWidth="3">
              {actionIcons[i]}
            </svg>
            <ActionLabel>{label}</ActionLabel>
            {i === 3 && <ActionBadge $size={17} />}
          </ActionCell>
        ))}
      </BottomBar>
    </Page>
  );
}
